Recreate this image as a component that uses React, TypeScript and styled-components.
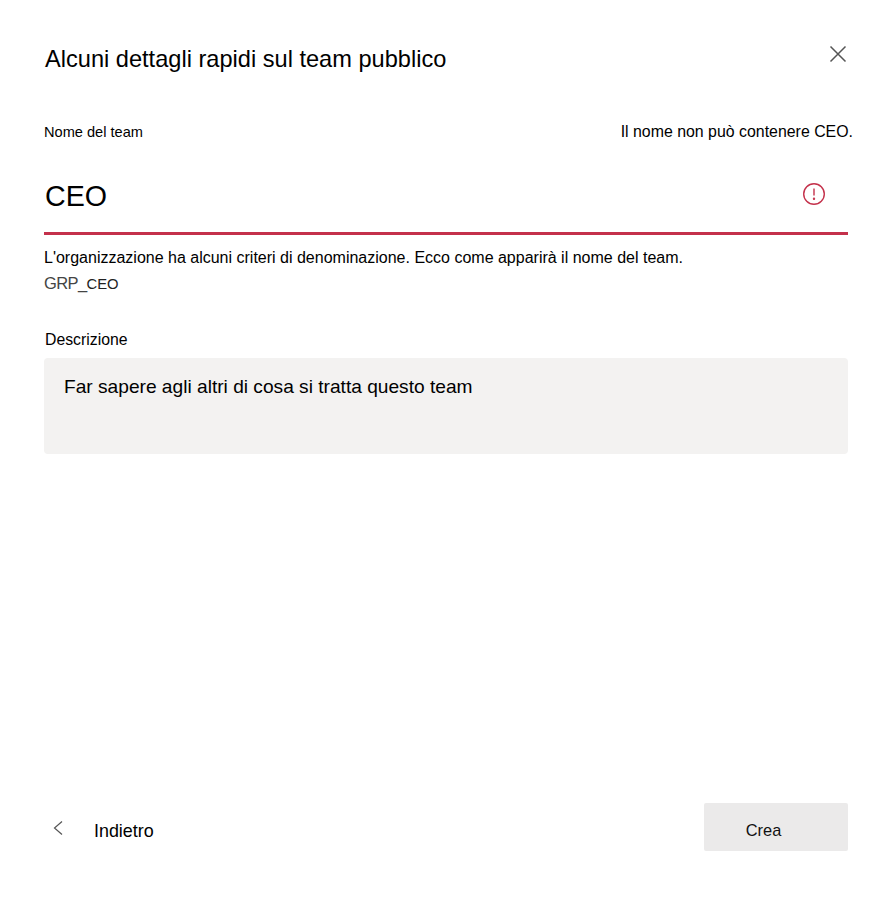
import styled, { createGlobalStyle } from 'styled-components';

const GlobalStyle = createGlobalStyle`
  html, body {
    margin: 0;
    padding: 0;
    background: #fff;
  }
  body {
    font-family: "Liberation Sans", Arial, sans-serif;
    color: #000;
  }
`;

const Dialog = styled.div`
  width: 893px;
  height: 898px;
  box-sizing: border-box;
  padding: 0 45px 47px 44px;
  display: flex;
  flex-direction: column;
  overflow: hidden;
`;

const Header = styled.header`
  height: 120px;
  display: flex;
  justify-content: space-between;
  align-items: flex-start;
  padding-top: 44px;
  box-sizing: border-box;
`;

const Title = styled.h1`
  margin: 0 0 0 1px;
  font-size: 23.6px;
  line-height: 30px;
  font-weight: 400;
`;

const CloseButton = styled.button`
  width: 20px;
  height: 20px;
  padding: 0;
  border: 0;
  background: none;
  color: #555;
  display: flex;
`;

const LabelRow = styled.div`
  display: flex;
  justify-content: space-between;
  align-items: center;
  height: 24px;
`;

const Label = styled.label`
  font-size: 14.6px;
`;

const ErrorText = styled.span`
  font-size: 15.9px;
  margin-right: -5px;
`;

const NameField = styled.div`
  margin-top: 20px;
  height: 68px;
  display: flex;
  align-items: center;
  justify-content: space-between;
  border-bottom: 3px solid #c4314b;
`;

const NameValue = styled.span`
  font-size: 28.6px;
  margin-left: 1px;
  margin-top: -4px;
`;

const ErrorIcon = styled.svg`
  width: 24px;
  height: 24px;
  margin-right: 22px;
  margin-bottom: 8px;
  color: #c4314b;
`;

const Hint = styled.p`
  margin: 13px 0 0;
  font-size: 16px;
  line-height: 20px;
`;

const Preview = styled.div`
  margin-top: 5px;
  height: 20px;
  color: #444;
  font-size: 16.5px;
  line-height: 20px;
  letter-spacing: -0.6px;
`;

const PreviewName = styled.span`
  font-size: 14.8px;
  letter-spacing: 0;
  color: #222;
`;

const DescriptionLabel = styled.label`
  display: block;
  margin: 37px 0 0 1px;
  font-size: 15.8px;
  line-height: 20px;
`;

const Description = styled.div`
  margin-top: 8px;
  height: 96px;
  box-sizing: border-box;
  padding: 18px 20px;
  background: #f3f2f1;
  border-radius: 4px;
  font-size: 19.15px;
  line-height: 22px;
`;

const Footer = styled.footer`
  margin-top: auto;
  display: flex;
  justify-content: space-between;
  align-items: center;
`;

const BackButton = styled.button`
  display: flex;
  align-items: center;
  gap: 27px;
  padding: 8px 0 0 7px;
  border: 0;
  background: none;
  font: inherit;
  font-size: 17.9px;
  color: #000;
`;

const BackIcon = styled.svg`
  width: 16px;
  height: 16px;
  color: #555;
  margin-top: -6px;
`;

const CreateButton = styled.button`
  width: 144px;
  height: 48px;
  border: 0;
  border-radius: 2px;
  background: #ebeaea;
  color: #111;
  font: inherit;
  font-size: 16.4px;
  padding: 7px 25px 0 0;
`;

export default function App() {
  return (
    <>
      <GlobalStyle />
      <Dialog>
        <Header>
          <Title>Alcuni dettagli rapidi sul team pubblico</Title>
          <CloseButton aria-label="Chiudi">
            <svg viewBox="0 0 20 20" width="20" height="20" fill="none" stroke="currentColor" strokeWidth="1.5">
              <path d="M2.5 2.5 L17.5 17.5 M17.5 2.5 L2.5 17.5" />
            </svg>
          </CloseButton>
        </Header>
        <LabelRow>
          <Label>Nome del team</Label>
          <ErrorText>Il nome non può contenere CEO.</ErrorText>
        </LabelRow>
        <NameField>
          <NameValue>CEO</NameValue>
          <ErrorIcon viewBox="0 0 24 24" fill="none" stroke="currentColor" strokeWidth="1.4">
            <circle cx="12" cy="12" r="10.3" />
            <path d="M12 6.5 V13.5" />
            <circle cx="12" cy="16.8" r="0.5" fill="currentColor" />
          </ErrorIcon>
        </NameField>
        <Hint>L'organizzazione ha alcuni criteri di denominazione. Ecco come apparirà il nome del team.</Hint>
        <Preview>
          GRP_<PreviewName>CEO</PreviewName>
        </Preview>
        <DescriptionLabel>Descrizione</DescriptionLabel>
        <Description>Far sapere agli altri di cosa si tratta questo team</Description>
        <Footer>
          <BackButton>
            <BackIcon viewBox="0 0 16 16" fill="none" stroke="currentColor" strokeWidth="1.2">
              <path d="M11 1.5 L3.5 8 L11 14.5" />
            </BackIcon>
            Indietro
          </BackButton>
          <CreateButton>Crea</CreateButton>
        </Footer>
      </Dialog>
    </>
  );
}
